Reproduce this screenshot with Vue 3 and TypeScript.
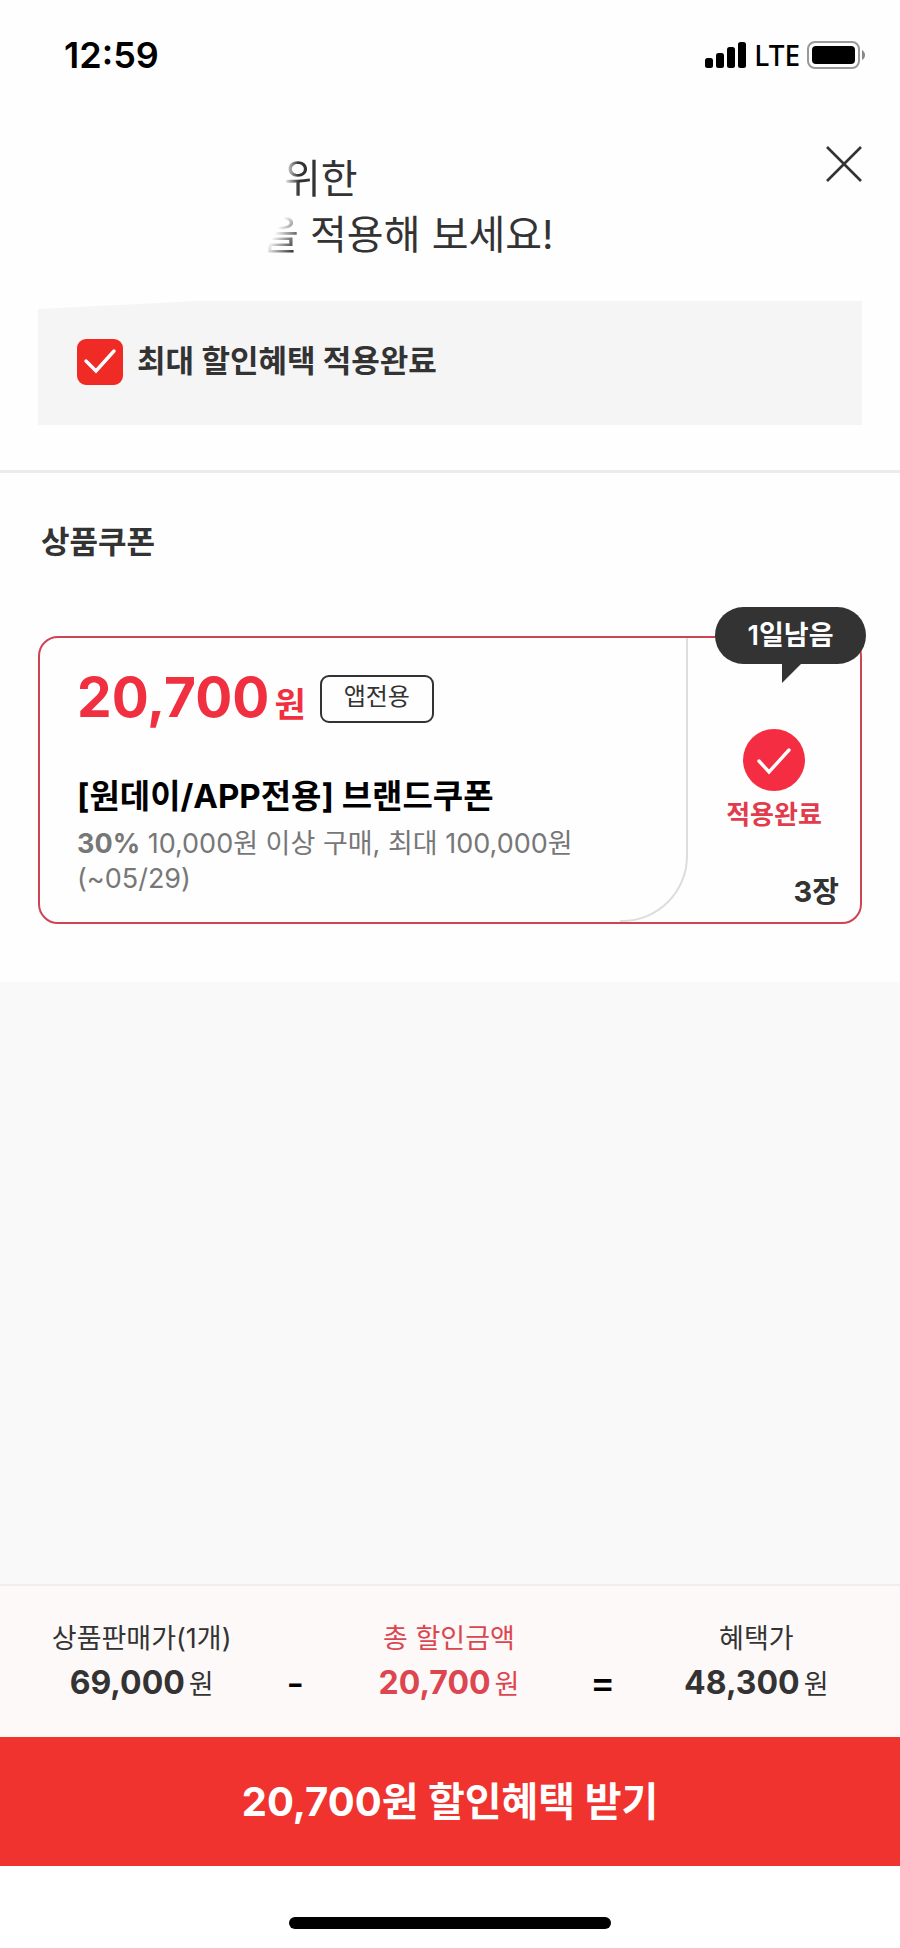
<script setup lang="ts">
import { computed, ref } from 'vue'

interface Coupon {
  name: string
  amount: number
  rate: number
  minimum: number
  maximum: number
  until: string
  daysLeft: number
  count: number
}

const price = 69000
const coupon: Coupon = {
  name: '[원데이/APP전용] 브랜드쿠폰',
  amount: 20700,
  rate: 30,
  minimum: 10000,
  maximum: 100000,
  until: '05/29',
  daysLeft: 1,
  count: 3,
}

const bestApplied = ref(true)
const discounted = computed(() => price - coupon.amount)
const format = (value: number): string => value.toLocaleString('en-US')
</script>

<template>
  <div class="page">
    <div class="status">
      <span class="time">12:59</span>
      <div class="indicators">
        <svg class="signal" viewBox="0 0 42 26" aria-hidden="true">
          <rect x="0" y="16" width="8" height="10" rx="2.5" />
          <rect x="11" y="11" width="8" height="15" rx="2.5" />
          <rect x="22" y="5" width="8" height="21" rx="2.5" />
          <rect x="33" y="0" width="8" height="26" rx="2.5" />
        </svg>
        <span class="network">LTE</span>
        <svg class="battery" viewBox="0 0 60 28" aria-hidden="true">
          <rect x="1" y="1" width="51" height="26" rx="7" fill="none" stroke="#999" stroke-width="2" />
          <rect x="5" y="5" width="43" height="18" rx="4" fill="#000" />
          <path d="M55 9c4 2 4 8 0 10z" fill="#888" />
        </svg>
      </div>
    </div>

    <header class="header">
      <h1 class="headline">
        <span class="line first"><span class="fade-light">위</span>한</span>
        <span class="line second"><span class="fade-strong">을</span> 적용해 보세요!</span>
      </h1>
      <button class="close" type="button" aria-label="닫기">
        <svg viewBox="0 0 36 36" aria-hidden="true">
          <path d="M1 1l34 34M35 1L1 35" fill="none" stroke="#333" stroke-width="2.6" />
        </svg>
      </button>
    </header>

    <label class="notice">
      <span class="check">
        <input v-model="bestApplied" type="checkbox" />
        <svg v-if="bestApplied" viewBox="0 0 46 46" aria-hidden="true">
          <path d="M9 22l10 10L37 12" fill="none" stroke="#fff" stroke-width="3.4" stroke-linecap="round" />
        </svg>
      </span>
      <span>최대 할인혜택 적용완료</span>
    </label>

    <section class="coupons">
      <h2 class="section-title">상품쿠폰</h2>
      <article class="coupon">
        <div class="detail">
          <div class="amount-row">
            <p class="amount">{{ format(coupon.amount) }}<span class="won">원</span></p>
            <span class="badge">앱전용</span>
          </div>
          <h3 class="name">{{ coupon.name }}</h3>
          <p class="terms">
            <b>{{ coupon.rate }}%</b> {{ format(coupon.minimum) }}원 이상 구매, 최대 {{ format(coupon.maximum) }}원<br />(~{{ coupon.until }})
          </p>
        </div>
        <div class="side">
          <button class="applied" type="button">
            <svg viewBox="0 0 62 62" aria-hidden="true">
              <circle cx="31" cy="31" r="31" fill="#f52d42" />
              <path d="M16 32l10 11L46 21" fill="none" stroke="#fff" stroke-width="3.4" stroke-linecap="round" />
            </svg>
            <span>적용완료</span>
          </button>
          <span class="count">{{ coupon.count }}장</span>
        </div>
        <div class="remaining">
          {{ coupon.daysLeft }}일남음
          <svg class="tail" viewBox="0 0 20 20" aria-hidden="true"><path d="M0 0h20L0 20z" fill="#333" /></svg>
        </div>
      </article>
    </section>

    <main class="space"></main>

    <section class="summary">
      <div class="cell">
        <span class="label">상품판매가(1개)</span>
        <span class="value"><b>{{ format(price) }}</b>원</span>
      </div>
      <span class="operator">-</span>
      <div class="cell red">
        <span class="label">총 할인금액</span>
        <span class="value"><b>{{ format(coupon.amount) }}</b>원</span>
      </div>
      <span class="operator">=</span>
      <div class="cell">
        <span class="label">혜택가</span>
        <span class="value"><b>{{ format(discounted) }}</b>원</span>
      </div>
    </section>

    <button class="cta" type="button">{{ format(coupon.amount) }}원 할인혜택 받기</button>
    <div class="home"><span class="home-bar"></span></div>
  </div>
</template>

<style>
body {
  background: #fff;
}
</style>

<style scoped>
* {
  box-sizing: border-box;
}

.page {
  display: flex;
  flex-direction: column;
  min-height: 100vh;
  background: #fefefe;
  color: #333;
  font-family: Inter, "Noto Sans CJK KR", sans-serif;
}

button {
  padding: 0;
  border: 0;
  background: none;
  color: inherit;
  font-family: inherit;
  cursor: pointer;
}

h1,
h2,
h3,
p {
  margin: 0;
}

svg {
  display: block;
}

.status {
  display: flex;
  align-items: center;
  justify-content: space-between;
  height: 110px;
  padding: 0 33px 0 64px;
  color: #000;
}

.time {
  font-size: 36px;
  font-weight: 600;
}

.indicators {
  display: flex;
  align-items: center;
  gap: 7px;
}

.signal {
  width: 42px;
  height: 26px;
}

.network {
  font-family: "Noto Sans", sans-serif;
  font-size: 28px;
  font-weight: 500;
  line-height: 28px;
}

.battery {
  width: 60px;
  height: 28px;
}

.header {
  display: flex;
  align-items: flex-start;
  justify-content: space-between;
  padding: 36px 38px 38px;
}

.headline {
  padding-top: 5px;
  font-size: 40px;
  font-weight: 400;
  line-height: 56px;
}

.line {
  display: block;
}

.first {
  padding-left: 246px;
}

.second {
  padding-left: 224px;
}

.fade-light {
  mask-image: linear-gradient(90deg, transparent, #000 40%);
}

.fade-strong {
  mask-image: linear-gradient(120deg, transparent 40%, #000 85%);
}

.close {
  width: 36px;
  height: 36px;
}

.notice {
  display: flex;
  align-items: flex-start;
  gap: 14px;
  height: 124px;
  margin: 0 38px 45px;
  padding: 38px 39px;
  background: #f5f5f5;
  clip-path: polygon(0 8px, 160px 0, 100% 0, 100% 100%, 0 100%);
  font-size: 31px;
  font-weight: 700;
  line-height: 44px;
}

.check {
  display: grid;
  width: 46px;
  height: 46px;
}

.check input,
.check svg {
  grid-area: 1 / 1;
  width: 46px;
  height: 46px;
  margin: 0;
}

.check input {
  appearance: none;
  border: 2px solid #f02a24;
  border-radius: 9px;
}

.check input:checked {
  background: #f02a24;
}

.check svg {
  pointer-events: none;
}

.coupons {
  padding: 47px 38px 58px;
  border-top: 3px solid #ebebeb;
}

.section-title {
  padding-left: 3px;
  font-size: 31px;
  font-weight: 700;
  line-height: 44px;
}

.coupon {
  position: relative;
  display: flex;
  min-height: 288px;
  margin-top: 72px;
  border: 2px solid #cf4453;
  border-radius: 20px;
}

.detail {
  position: relative;
  flex: 1;
  padding: 35px 0 0 37px;
}

.detail::after {
  content: "";
  position: absolute;
  inset: 0 0 0 auto;
  width: 66px;
  border-right: 2px solid #ddd;
  border-bottom: 2px solid #ddd;
  border-bottom-right-radius: 66px;
}

.amount-row {
  display: flex;
  align-items: center;
  gap: 14px;
  height: 52px;
}

.amount {
  padding-top: 4px;
  color: #f03040;
  font-size: 55px;
  font-weight: 700;
  line-height: 52px;
}

.won {
  margin-left: 5px;
  font-size: 34px;
}

.badge {
  height: 48px;
  padding: 0 22px;
  border: 2px solid #333;
  border-radius: 9px;
  font-size: 24px;
  line-height: 40px;
}

.name {
  margin-top: 47px;
  color: #000;
  font-size: 33px;
  font-weight: 700;
  line-height: 48px;
}

.terms {
  margin-top: 6px;
  color: #777;
  font-size: 27px;
  line-height: 35px;
}

.side {
  display: flex;
  flex-direction: column;
  justify-content: space-between;
  width: 172px;
  padding: 91px 21px 8px;
}

.applied {
  display: flex;
  flex-direction: column;
  align-items: center;
  gap: 6px;
  color: #e23b4c;
  font-size: 26px;
  font-weight: 700;
  line-height: 36px;
}

.applied svg {
  width: 62px;
  height: 62px;
}

.count {
  font-size: 29px;
  font-weight: 700;
  line-height: 44px;
  text-align: right;
}

.remaining {
  position: absolute;
  top: -31px;
  right: -6px;
  width: 151px;
  border-radius: 29px;
  background: #333;
  color: #fff;
  font-size: 27px;
  font-weight: 600;
  line-height: 57px;
  text-align: center;
}

.tail {
  position: absolute;
  top: 56px;
  left: 67px;
  width: 20px;
  height: 20px;
}

.space {
  flex: 1;
  background: #f9f9f9;
}

.summary {
  display: grid;
  grid-template-columns: 1fr 60px 1fr 60px 1fr;
  align-items: end;
  padding: 31px 20px 30px 18px;
  border-top: 2px solid #eee;
  background: #fdf9f8;
  text-align: center;
}

.cell {
  display: flex;
  flex-direction: column;
}

.label,
.value {
  font-size: 27px;
  line-height: 44px;
}

.value b {
  margin-right: 4px;
  font-size: 32px;
}

.red {
  color: #dc4650;
}

.operator {
  color: #000;
  font-size: 38px;
  font-weight: 500;
  line-height: 44px;
  font-feature-settings: "case";
}

.cta {
  height: 129px;
  padding-bottom: 6px;
  background: #f0332e;
  color: #fff;
  font-size: 40px;
  font-weight: 700;
}

.home {
  display: flex;
  align-items: flex-end;
  justify-content: center;
  height: 82px;
  padding-bottom: 19px;
  background: #fff;
}

.home-bar {
  width: 322px;
  height: 12px;
  border-radius: 6px;
  background: #000;
}
</style>
